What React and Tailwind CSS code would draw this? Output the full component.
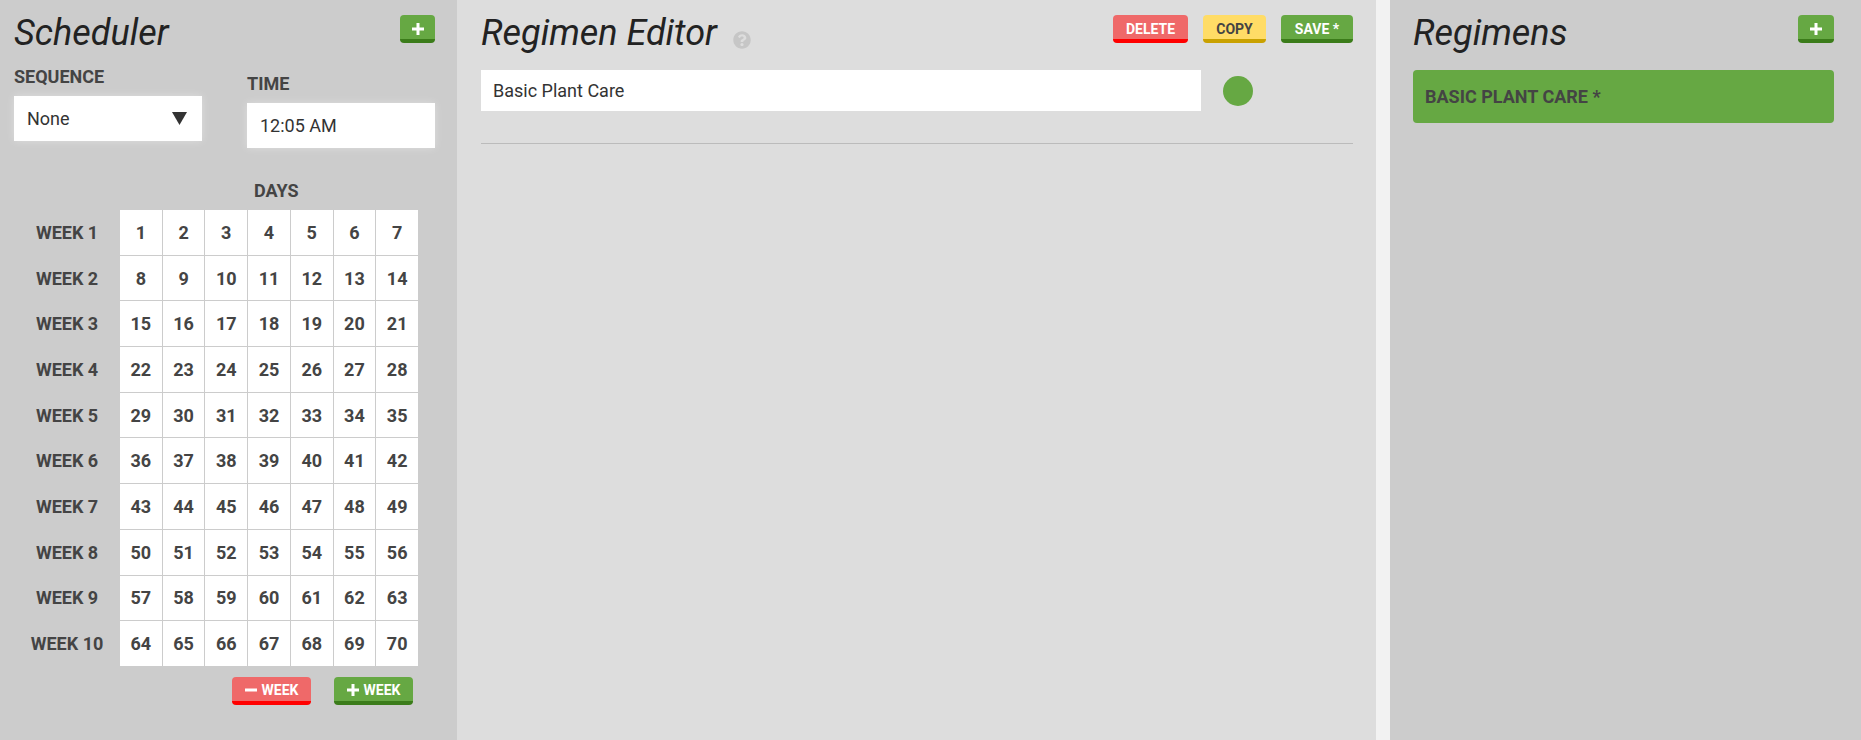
import { FaQuestionCircle } from 'react-icons/fa'

const font = { fontFamily: 'Roboto, "Liberation Sans", sans-serif' }

function Plus({ size = 12 }) {
  return (
    <svg width={size} height={size} viewBox="0 0 12 12" className="shrink-0">
      <rect x="4.5" y="0" width="3" height="12" fill="currentColor" />
      <rect x="0" y="4.5" width="12" height="3" fill="currentColor" />
    </svg>
  )
}

function Minus() {
  return (
    <svg width="12" height="12" viewBox="0 0 12 12" className="shrink-0">
      <rect x="0" y="4.5" width="12" height="3" fill="currentColor" />
    </svg>
  )
}

const tones = {
  red: 'bg-[#ef6969] border-[#ff0000] text-white',
  yellow: 'bg-[#ffdc66] border-[#c9a100] text-[#444]',
  green: 'bg-[#66a843] border-[#3b7c1a] text-white',
}

function Btn({ tone = 'green', className = '', children }) {
  return (
    <button
      type="button"
      className={`flex h-[28px] items-center justify-center gap-[5px] rounded-[4px] border-b-[4px] pt-[3px] text-[14px] font-bold uppercase leading-none ${tones[tone]} ${className}`}
    >
      {children}
    </button>
  )
}

function Title({ children }) {
  return <h1 className="text-[36px] font-normal italic leading-[37px] text-[#222]">{children}</h1>
}

function Label({ children }) {
  return <div className="text-[18px] font-bold uppercase leading-[20px] text-[#444]">{children}</div>
}

function Scheduler() {
  const weeks = Array.from({ length: 10 }, (_, i) => i)
  return (
    <section className="flex h-full w-[457px] shrink-0 flex-col bg-[#cccccc] pl-[14px] pr-[22px]">
      <div className="flex items-start justify-between pt-[15px]">
        <Title>Scheduler</Title>
        <Btn className="w-[35px]">
          <Plus />
        </Btn>
      </div>

      <div className="flex items-start gap-[45px]">
        <div className="flex w-[188px] flex-col gap-[9px] pt-[15px]">
          <Label>Sequence</Label>
          <div className="flex h-[45px] items-center justify-between bg-white pl-[13px] pr-[15px] text-[18px] text-[#333] shadow-[0_0_8px_rgba(255,255,255,0.35)]">
            None
            <svg width="15" height="13" viewBox="0 0 15 13">
              <polygon points="0,0 15,0 7.5,13" fill="#333" />
            </svg>
          </div>
        </div>
        <div className="flex w-[188px] flex-col gap-[9px] pt-[22px]">
          <Label>Time</Label>
          <div className="flex h-[45px] items-center bg-white pl-[13px] text-[18px] text-[#333] shadow-[0_0_8px_rgba(255,255,255,0.35)]">
            12:05 AM
          </div>
        </div>
      </div>

      <div className="mt-[33px] pl-[240px]">
        <Label>Days</Label>
      </div>

      <div className="mt-[9px] flex">
        <div className="flex w-[106px] flex-col gap-px">
          {weeks.map((w) => (
            <div key={w} className="flex h-[44.7px] items-center justify-center text-[18px] font-bold text-[#444]">
              WEEK {w + 1}
            </div>
          ))}
        </div>
        <div className="grid w-[298px] grid-cols-7 gap-px bg-[#cccccc]">
          {weeks.map((w) =>
            Array.from({ length: 7 }, (_, d) => (
              <div
                key={`${w}-${d}`}
                className="flex h-[44.7px] items-center justify-center bg-white text-[18px] font-bold text-[#444]"
              >
                {w * 7 + d + 1}
              </div>
            ))
          )}
        </div>
      </div>

      <div className="mt-[11px] flex gap-[23px] pl-[218px]">
        <Btn tone="red" className="w-[79px]">
          <Minus />
          Week
        </Btn>
        <Btn tone="green" className="w-[79px]">
          <Plus />
          Week
        </Btn>
      </div>
    </section>
  )
}

function Editor() {
  return (
    <section className="flex h-full w-[919px] shrink-0 flex-col bg-[#dddddd] pl-[24px] pr-[23px]">
      <div className="flex items-start justify-between pt-[15px]">
        <div className="flex items-center gap-[16px]">
          <Title>Regimen Editor</Title>
          <FaQuestionCircle className="mt-[12px] h-[18px] w-[18px] text-[#c6c6c6]" />
        </div>
        <div className="flex gap-[15px]">
          <Btn tone="red" className="w-[75px]">Delete</Btn>
          <Btn tone="yellow" className="w-[63px]">Copy</Btn>
          <Btn tone="green" className="w-[72px]">Save *</Btn>
        </div>
      </div>

      <div className="mt-[18px] flex items-center gap-[22px]">
        <div className="flex h-[41px] w-[720px] items-center bg-white pl-[12px] text-[18px] text-[#333]">
          Basic Plant Care
        </div>
        <div className="h-[30px] w-[30px] rounded-full bg-[#66a843]" />
      </div>

      <div className="mt-[32px] h-px bg-[#bbbbbb]" />
    </section>
  )
}

function Regimens() {
  return (
    <section className="flex h-full flex-1 flex-col bg-[#cccccc] pl-[23px] pr-[27px]">
      <div className="flex items-start justify-between pt-[15px]">
        <Title>Regimens</Title>
        <Btn className="w-[36px]">
          <Plus />
        </Btn>
      </div>
      <div className="mt-[18px] flex h-[53px] items-center rounded-[4px] bg-[#66a843] pl-[12px] text-[18px] font-bold uppercase text-[#444]">
        Basic Plant Care *
      </div>
    </section>
  )
}

export default function App() {
  return (
    <div className="flex h-[740px] w-[1861px] overflow-hidden" style={font}>
      <Scheduler />
      <Editor />
      <div className="h-full w-[14px] shrink-0 bg-[#f2f2f2]" />
      <Regimens />
    </div>
  )
}
